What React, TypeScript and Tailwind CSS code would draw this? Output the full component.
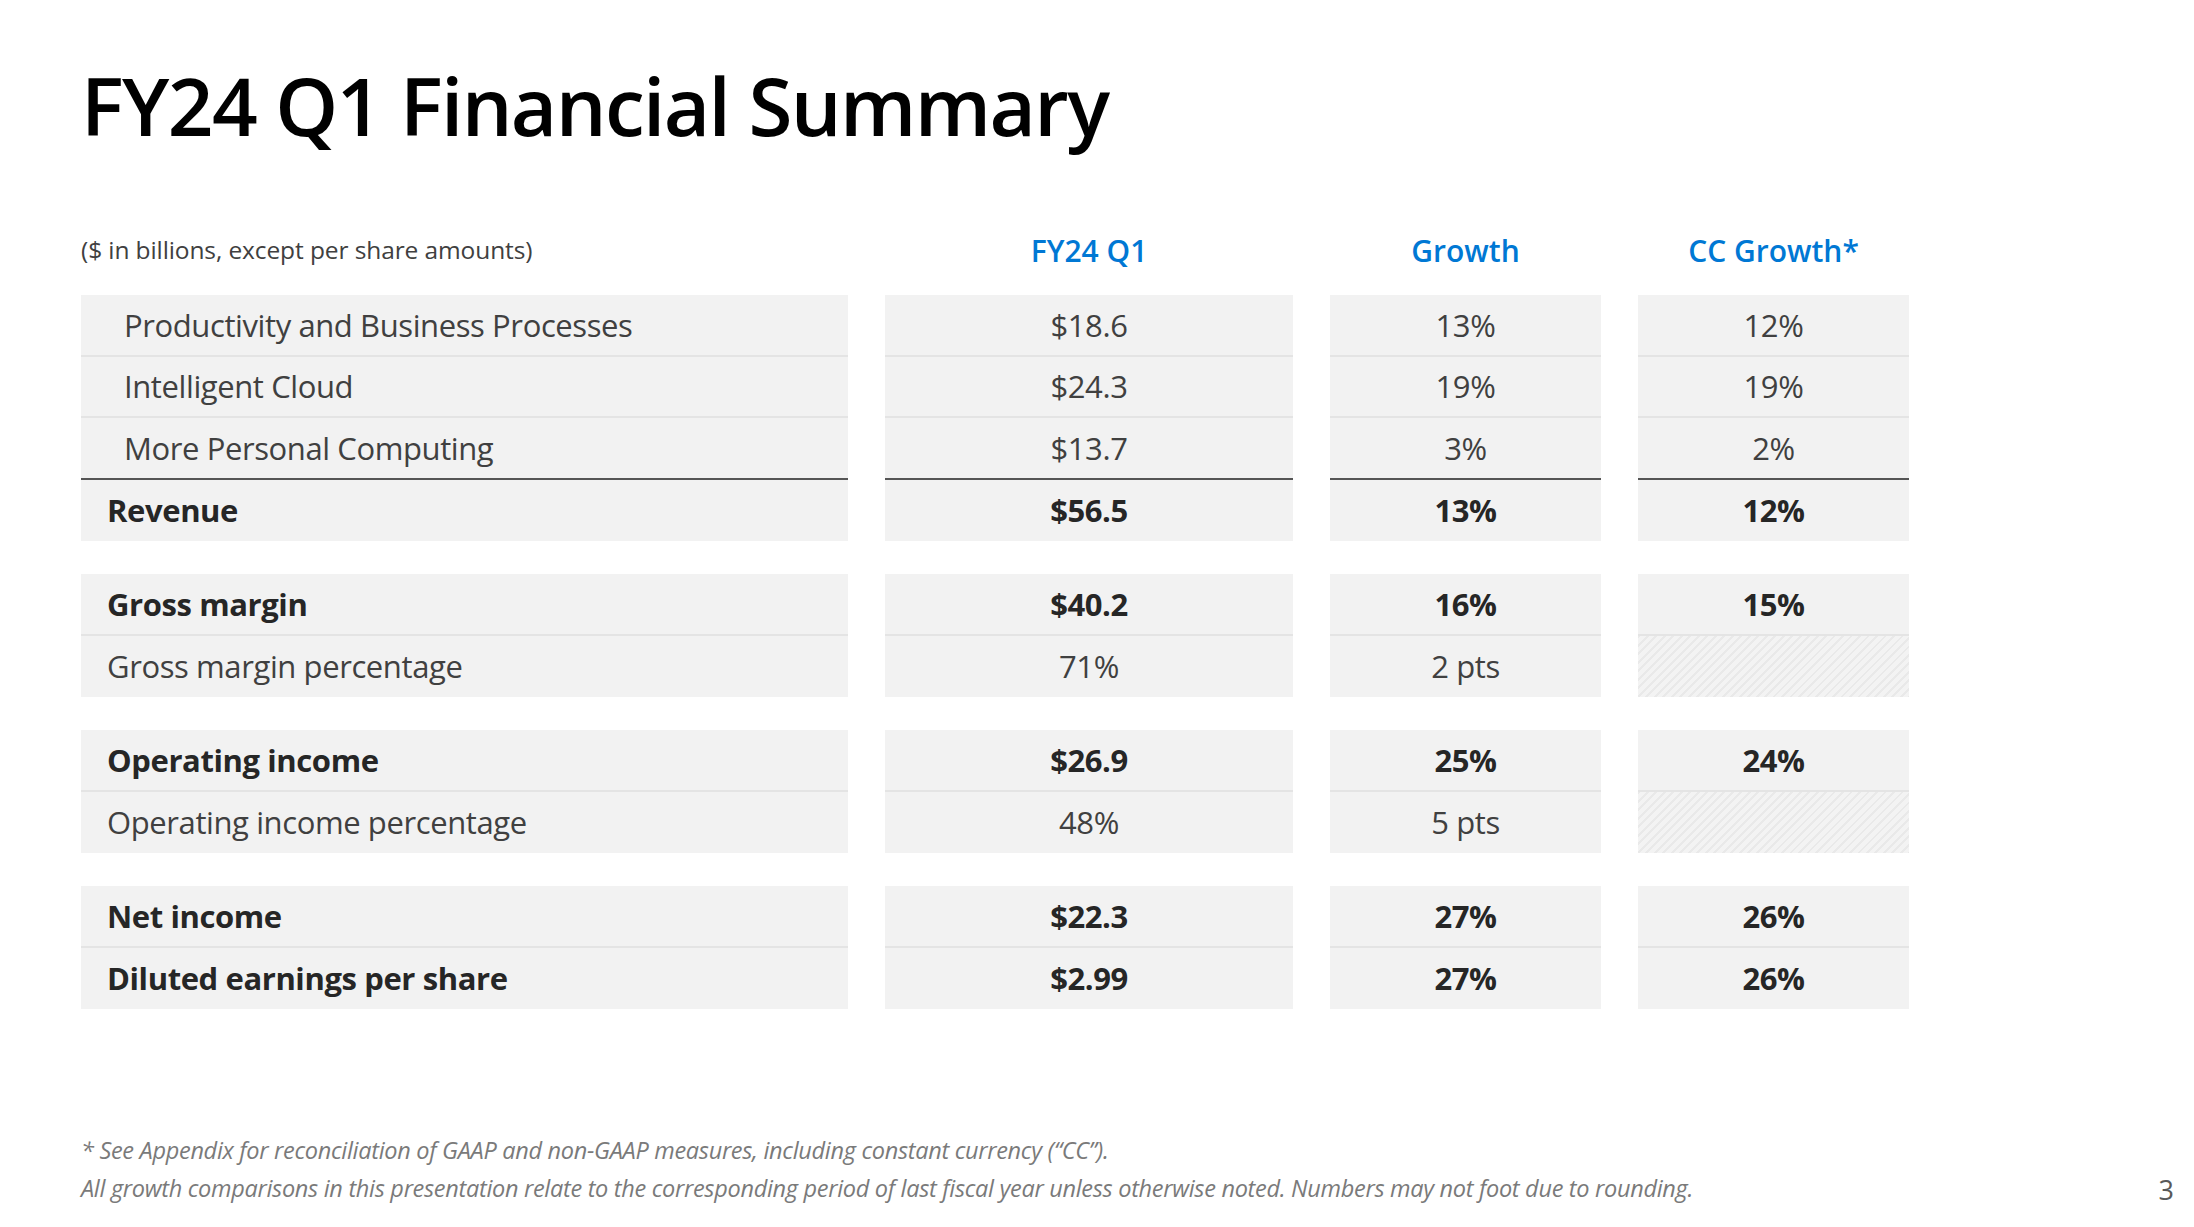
import React from "react";

type Row = {
  label: string;
  value: string;
  growth: string;
  cc: string | null;
  bold?: boolean;
  indent?: boolean;
};

const groups: Row[][] = [
  [
    { label: "Productivity and Business Processes", value: "$18.6", growth: "13%", cc: "12%", indent: true },
    { label: "Intelligent Cloud", value: "$24.3", growth: "19%", cc: "19%", indent: true },
    { label: "More Personal Computing", value: "$13.7", growth: "3%", cc: "2%", indent: true },
    { label: "Revenue", value: "$56.5", growth: "13%", cc: "12%", bold: true },
  ],
  [
    { label: "Gross margin", value: "$40.2", growth: "16%", cc: "15%", bold: true },
    { label: "Gross margin percentage", value: "71%", growth: "2 pts", cc: null },
  ],
  [
    { label: "Operating income", value: "$26.9", growth: "25%", cc: "24%", bold: true },
    { label: "Operating income percentage", value: "48%", growth: "5 pts", cc: null },
  ],
  [
    { label: "Net income", value: "$22.3", growth: "27%", cc: "26%", bold: true },
    { label: "Diluted earnings per share", value: "$2.99", growth: "27%", cc: "26%", bold: true },
  ],
];

const grid = "grid grid-cols-[767px_408px_271px_271px] gap-x-[37px]";

const Cell = ({
  children,
  bold,
  left,
  indent,
  border,
  hatch,
}: {
  children?: React.ReactNode;
  bold?: boolean;
  left?: boolean;
  indent?: boolean;
  border: "light" | "dark" | "none";
  hatch?: boolean;
}) => (
  <div
    className={[
      "h-[61.5px] flex items-center text-[31px] tracking-[-0.4px]",
      hatch
        ? "bg-[repeating-linear-gradient(135deg,#e9e9e9_0px,#e9e9e9_2px,#f3f3f3_2px,#f3f3f3_6px)]"
        : "bg-[#f2f2f2]",
      left ? (indent ? "pl-[43px]" : "pl-[26px]") : "justify-center",
      bold ? "font-bold text-[#262626]" : "text-[#404040]",
      border === "light" ? "border-b-2 border-[#e4e4e4]" : "",
      border === "dark" ? "border-b-2 border-[#555555]" : "",
    ].join(" ")}
  >
    {children}
  </div>
);

export default function App() {
  return (
    <div className="w-[2194px] h-[1227px] bg-white relative font-['Open_Sans','Noto_Sans',sans-serif] overflow-hidden">
      <div className="pl-[81px] pt-[55px]">
        <h1 className="text-[80px] leading-[100px] font-semibold text-black tracking-[-1.6px]">
          FY24 Q1 Financial Summary
        </h1>

        <div className={`${grid} mt-[73px] items-center h-[44px]`}>
          <div className="text-[24.5px] text-[#404040] tracking-[-0.1px]">
            ($ in billions, except per share amounts)
          </div>
          <div className="text-center text-[30px] font-semibold text-[#0078d4]">FY24 Q1</div>
          <div className="text-center text-[30px] font-semibold text-[#0078d4]">Growth</div>
          <div className="text-center text-[30px] font-semibold text-[#0078d4]">CC Growth*</div>
        </div>

        <div className="mt-[23px] flex flex-col gap-[33px]">
          {groups.map((g, gi) => (
            <div key={gi} className="flex flex-col">
              {g.map((r, ri) => {
                const last = ri === g.length - 1;
                const border = last ? "none" : gi === 0 && ri === 2 ? "dark" : "light";
                return (
                  <div key={r.label} className={grid}>
                    <Cell left indent={r.indent} bold={r.bold} border={border}>
                      {r.label}
                    </Cell>
                    <Cell bold={r.bold} border={border}>
                      {r.value}
                    </Cell>
                    <Cell bold={r.bold} border={border}>
                      {r.growth}
                    </Cell>
                    <Cell bold={r.bold} border={r.cc ? border : "none"} hatch={!r.cc}>
                      {r.cc}
                    </Cell>
                  </div>
                );
              })}
            </div>
          ))}
        </div>

        <div className="mt-[122px] text-[23.5px] italic text-[#7a7a7a] tracking-[-0.3px] leading-[38px]">
          <p>* See Appendix for reconciliation of GAAP and non-GAAP measures, including constant currency (“CC”).</p>
          <p>
            All growth comparisons in this presentation relate to the corresponding period of last fiscal year unless
            otherwise noted. Numbers may not foot due to rounding.
          </p>
        </div>
      </div>
      <div className="absolute right-[20px] top-[1170px] text-[27px] text-[#595959]">3</div>
    </div>
  );
}
